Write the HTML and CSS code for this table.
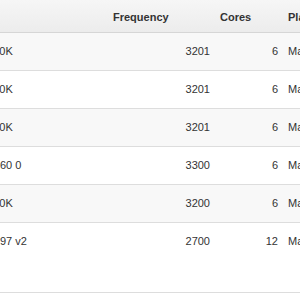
FILE: index.html
```html
<!DOCTYPE html>
<html>
<head>
<meta charset="utf-8">
<link rel="stylesheet" href="styles.css">
</head>
<body>
<div class="viewport">
<table class="cpu-table">
  <colgroup>
    <col class="c-name"><col class="c-freq"><col class="c-cores"><col class="c-model">
  </colgroup>
  <thead>
    <tr><th>Name</th><th>Frequency</th><th>Cores</th><th>Platform</th></tr>
  </thead>
  <tbody>
    <tr class="odd"><td>Intel Core i7-3930K</td><td class="num">3201</td><td class="num">6</td><td>Mac Pro</td></tr>
    <tr><td>Intel Core i7-3930K</td><td class="num">3201</td><td class="num">6</td><td>Mac Pro</td></tr>
    <tr class="odd"><td>Intel Core i7-3930K</td><td class="num">3201</td><td class="num">6</td><td>Mac Pro</td></tr>
    <tr><td>Intel Xeon E5-1660 0</td><td class="num">3300</td><td class="num">6</td><td>Mac Pro</td></tr>
    <tr class="odd"><td>Intel Core i7-3930K</td><td class="num">3200</td><td class="num">6</td><td>Mac Pro</td></tr>
    <tr class="tall"><td>Intel Xeon E5-2697 v2</td><td class="num">2700</td><td class="num">12</td><td>Mac Pro</td></tr>
  </tbody>
</table>
</div>
</body>
</html>
```
FILE: styles.css
```css
html, body {
  margin: 0;
  padding: 0;
  background: #ffffff;
}
.viewport {
  width: 300px;
  height: 300px;
  overflow: hidden;
}
.cpu-table {
  margin-left: -87px;
  width: 520px;
  table-layout: fixed;
  border-collapse: collapse;
  font-family: "Liberation Sans", Arial, sans-serif;
  font-size: 11px;
  line-height: 13px;
  color: #333333;
}
.c-name { width: 195px; }
.c-freq { width: 107px; }
.c-cores { width: 68px; }
.c-model { width: 150px; }
.cpu-table th {
  text-align: left;
  font-weight: bold;
  color: #333333;
  padding: 11px 5px 8px;
  background: linear-gradient(#f6f6f6, #ececec);
  border-bottom: 1px solid #d6d6d6;
  white-space: nowrap;
}
.cpu-table td {
  padding: 12px 5px;
  border-bottom: 1px solid #dddddd;
  vertical-align: top;
  white-space: nowrap;
  overflow: hidden;
}
.cpu-table td.num {
  text-align: right;
}
.cpu-table tr.odd td {
  background: #f8f8f8;
}
.cpu-table tr.tall td {
  height: 45px;
}
```
